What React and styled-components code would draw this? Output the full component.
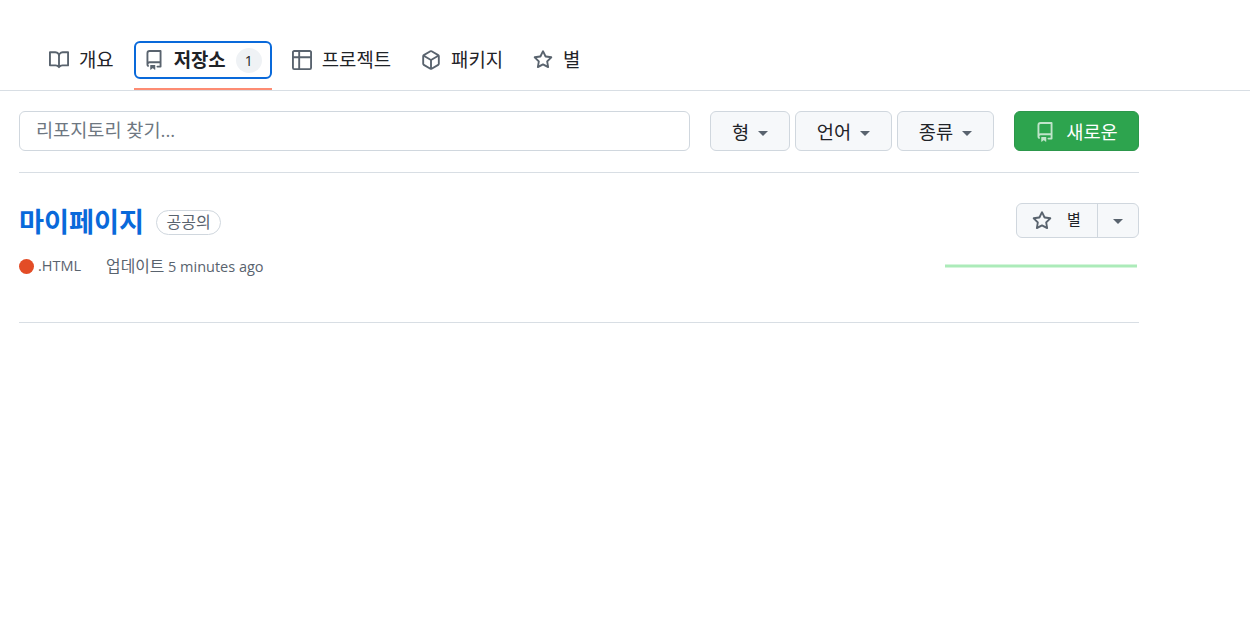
import React from "react";
import styled, { createGlobalStyle } from "styled-components";

const Global = createGlobalStyle`
  html, body { margin: 0; background: #fff; }
  body { font-family: "Open Sans", "Noto Sans CJK KR", sans-serif; color: #1f2328; }
`;

const paths = {
  book: "M0 1.75A.75.75 0 0 1 .75 1h4.253c1.227 0 2.317.59 3 1.501A3.743 3.743 0 0 1 11.006 1h4.245a.75.75 0 0 1 .75.75v10.5a.75.75 0 0 1-.75.75h-4.507a2.25 2.25 0 0 0-1.591.659l-.622.621a.75.75 0 0 1-1.06 0l-.622-.621A2.25 2.25 0 0 0 5.258 13H.75a.75.75 0 0 1-.75-.75Zm7.251 10.324.004-5.073-.002-2.253A2.25 2.25 0 0 0 5.003 2.5H1.5v9h3.757a3.75 3.75 0 0 1 1.994.574ZM8.755 4.75l-.004 7.322a3.752 3.752 0 0 1 1.992-.572H14.5v-9h-3.495a2.25 2.25 0 0 0-2.25 2.25Z",
  repo: "M2 2.5A2.5 2.5 0 0 1 4.5 0h8.75a.75.75 0 0 1 .75.75v12.5a.75.75 0 0 1-.75.75h-2.5a.75.75 0 0 1 0-1.5h1.75v-2h-8a1 1 0 0 0-.714 1.7.75.75 0 1 1-1.072 1.05A2.495 2.495 0 0 1 2 11.5Zm10.5-1h-8a1 1 0 0 0-1 1v6.708A2.486 2.486 0 0 1 4.5 9h8ZM5 12.25a.25.25 0 0 1 .25-.25h3.5a.25.25 0 0 1 .25.25v3.25a.25.25 0 0 1-.4.2l-1.45-1.087a.249.249 0 0 0-.3 0L5.4 15.7a.25.25 0 0 1-.4-.2Z",
  table: "M0 1.75C0 .784.784 0 1.75 0h12.5C15.216 0 16 .784 16 1.75v12.5A1.75 1.75 0 0 1 14.25 16H1.75A1.75 1.75 0 0 1 0 14.25ZM6.5 6.5v8h7.75a.25.25 0 0 0 .25-.25V6.5Zm8-1.5V1.75a.25.25 0 0 0-.25-.25H6.5V5Zm-13 1.5v7.75c0 .138.112.25.25.25H5v-8ZM5 5V1.5H1.75a.25.25 0 0 0-.25.25V5Z",
  pkg: "m8.878.392 5.25 3.045c.54.314.872.89.872 1.514v6.098a1.75 1.75 0 0 1-.872 1.514l-5.25 3.045a1.75 1.75 0 0 1-1.756 0l-5.25-3.045A1.75 1.75 0 0 1 1 11.049V4.951c0-.624.332-1.201.872-1.514L7.122.392a1.75 1.75 0 0 1 1.756 0ZM7.875 1.69l-4.63 2.685L8 7.133l4.755-2.758-4.63-2.685a.248.248 0 0 0-.25 0ZM2.5 5.677v5.372c0 .09.047.171.125.216l4.625 2.683V8.432Zm6.25 8.271 4.625-2.683a.25.25 0 0 0 .125-.216V5.677L8.75 8.432Z",
  star: "M8 .25a.75.75 0 0 1 .673.418l1.882 3.815 4.21.612a.75.75 0 0 1 .416 1.279l-3.046 2.97.719 4.192a.751.751 0 0 1-1.088.791L8 12.347l-3.766 1.98a.75.75 0 0 1-1.088-.79l.72-4.194L.818 6.374a.75.75 0 0 1 .416-1.28l4.21-.611L7.327.668A.75.75 0 0 1 8 .25Zm0 2.445L6.615 5.5a.75.75 0 0 1-.564.41l-3.097.45 2.24 2.184a.75.75 0 0 1 .216.664l-.528 3.084 2.769-1.456a.75.75 0 0 1 .698 0l2.77 1.456-.53-3.084a.75.75 0 0 1 .216-.664l2.24-2.183-3.096-.45a.75.75 0 0 1-.564-.41L8 2.694Z",
};

const Svg = styled.svg`
  flex: none;
  display: block;
  width: 20px;
  height: 20px;
  margin-top: ${(p) => p.$offset || 0}px;
  fill: ${(p) => p.$color || "#59636e"};
`;
const Icon = ({ name, offset, color }) => (
  <Svg viewBox="0 0 16 16" $offset={offset} $color={color}><path d={paths[name]} /></Svg>
);

const Nav = styled.nav`
  height: 90px;
  box-sizing: content-box;
  border-bottom: 1px solid #d8dee4;
  padding-left: 39px;
  display: flex;
  align-items: stretch;
  gap: 10px;
`;
const Tab = styled.div`
  position: relative;
  display: flex;
  align-items: center;
  gap: 10px;
  padding: 30px 10px 0;
  font-size: 18.85px;
  line-height: 24px;
  height: 60px;
  font-weight: ${(p) => (p.$active ? 700 : 400)};
  &::before {
    content: "";
    display: ${(p) => (p.$active ? "block" : "none")};
    position: absolute;
    left: 0; right: 0; top: 41px; height: 38px;
    box-sizing: border-box;
    border: 2px solid #0969da;
    border-radius: 6px;
  }
  &::after {
    content: "";
    display: ${(p) => (p.$active ? "block" : "none")};
    position: absolute;
    left: 0; right: 0; top: 88px; height: 2px;
    background: #fd8c73;
  }
`;
const Counter = styled.span`
  width: 26px;
  height: 25px;
  border-radius: 50%;
  background: #eff2f5;
  font-size: 14px;
  font-weight: 500;
  line-height: 25px;
  text-align: center;
`;
const Main = styled.main`
  width: 1120px;
  margin-left: 19px;
`;
const Toolbar = styled.div`
  display: flex;
  align-items: center;
  padding: 20px 0 21px;
  border-bottom: 1px solid #d8dee4;
`;
const Search = styled.input`
  width: 671px;
  height: 40px;
  box-sizing: border-box;
  margin-right: 20px;
  padding: 0 16px 3px;
  border: 1px solid #d0d7de;
  border-radius: 6px;
  font: 18.6px "Open Sans", "Noto Sans CJK KR", sans-serif;
  outline: none;
  &::placeholder { color: #6e7781; opacity: 1; }
`;
const Filter = styled.button`
  width: ${(p) => p.$w}px;
  height: 40px;
  margin-right: ${(p) => p.$mr}px;
  box-sizing: border-box;
  padding: 0 0 2px;
  display: flex;
  align-items: center;
  justify-content: center;
  gap: 9px;
  background: #f6f8fa;
  border: 1px solid #d0d7de;
  border-radius: 6px;
  color: #1f2328;
  font: 18.7px "Open Sans", "Noto Sans CJK KR", sans-serif;
`;
const Caret = styled.span`
  width: 0;
  height: 0;
  margin-top: ${(p) => p.$offset || 0}px;
  border-style: solid;
  border-width: 5px 5px 0;
  border-color: #59636e transparent transparent;
`;
const NewButton = styled.button`
  width: 125px;
  height: 40px;
  padding: 0 0 2px;
  display: flex;
  align-items: center;
  justify-content: center;
  gap: 11px;
  background: #2da44e;
  border: 1px solid #2c974b;
  border-radius: 6px;
  color: #fff;
  font: 18.7px "Open Sans", "Noto Sans CJK KR", sans-serif;
`;
const Repo = styled.article`
  display: grid;
  grid-template-columns: 1fr auto;
  height: 149px;
  border-bottom: 1px solid #d8dee4;
`;
const TitleRow = styled.div`
  display: flex;
  align-items: center;
  gap: 12px;
  height: 35px;
  margin-top: 32px;
`;
const Title = styled.a`
  color: #0969da;
  font-size: 27.2px;
  font-weight: 700;
  line-height: 33px;
  padding-bottom: 2px;
`;
const Chip = styled.span`
  display: block;
  height: 25px;
  box-sizing: border-box;
  padding: 0 9.5px;
  border: 1px solid #d0d7de;
  border-radius: 13px;
  color: #59636e;
  font-size: 16px;
  line-height: 23px;
`;
const Meta = styled.div`
  display: flex;
  align-items: center;
  height: 20px;
  margin-top: 15px;
  color: #59636e;
  font-size: 14.5px;
`;
const Dot = styled.span`
  width: 15px;
  height: 15px;
  margin-top: 2px;
  border-radius: 50%;
  background: #e34c26;
  margin-right: 4px;
`;
const Lang = styled.span`
  margin-right: 25px;
`;
const MetaWord = styled.span`
  font-size: 15.8px;
`;
const Side = styled.div`
  display: flex;
  flex-direction: column;
  align-items: flex-end;
`;
const StarGroup = styled.div`
  display: flex;
  width: 123px;
  height: 35px;
  margin-top: 30px;
  box-sizing: border-box;
  background: #f6f8fa;
  border: 1px solid #d0d7de;
  border-radius: 6px;
`;
const StarMain = styled.div`
  width: 81px;
  display: flex;
  align-items: center;
  padding-left: 15px;
  gap: 15px;
  box-sizing: border-box;
  border-right: 1px solid #d0d7de;
  font-size: 15px;
  line-height: 20px;
`;
const StarLabel = styled.span`
  padding-bottom: 3px;
`;
const StarMenu = styled.div`
  flex: 1;
  display: flex;
  align-items: center;
  justify-content: center;
`;
const Spark = styled.svg`
  display: block;
  width: 192px;
  height: 4px;
  margin: 26px 2px 0 0;
`;

export default function App() {
  return (
    <>
      <Global />
      <Nav>
        <Tab><Icon name="book" />개요</Tab>
        <Tab $active><Icon name="repo" />저장소<Counter>1</Counter></Tab>
        <Tab><Icon name="table" />프로젝트</Tab>
        <Tab><Icon name="pkg" />패키지</Tab>
        <Tab><Icon name="star" />별</Tab>
      </Nav>
      <Main>
        <Toolbar>
          <Search placeholder="리포지토리 찾기..." />
          <Filter $w={80} $mr={5}>형<Caret $offset={6} /></Filter>
          <Filter $w={97} $mr={5}>언어<Caret $offset={6} /></Filter>
          <Filter $w={97} $mr={20}>종류<Caret $offset={6} /></Filter>
          <NewButton><Icon name="repo" offset={4} color="rgba(255,255,255,0.7)" />새로운</NewButton>
        </Toolbar>
        <Repo>
          <div>
            <TitleRow>
              <Title>마이페이지</Title>
              <Chip>공공의</Chip>
            </TitleRow>
            <Meta>
              <Dot />
              <Lang>.HTML</Lang>
              <span><MetaWord>업데이트</MetaWord> 5 minutes ago</span>
            </Meta>
          </div>
          <Side>
            <StarGroup>
              <StarMain><Icon name="star" /><StarLabel>별</StarLabel></StarMain>
              <StarMenu><Caret $offset={1} /></StarMenu>
            </StarGroup>
            <Spark viewBox="0 0 192 4" preserveAspectRatio="none">
              <path d="M0 2H192" stroke="#acebb9" strokeWidth="3" />
            </Spark>
          </Side>
        </Repo>
      </Main>
    </>
  );
}
